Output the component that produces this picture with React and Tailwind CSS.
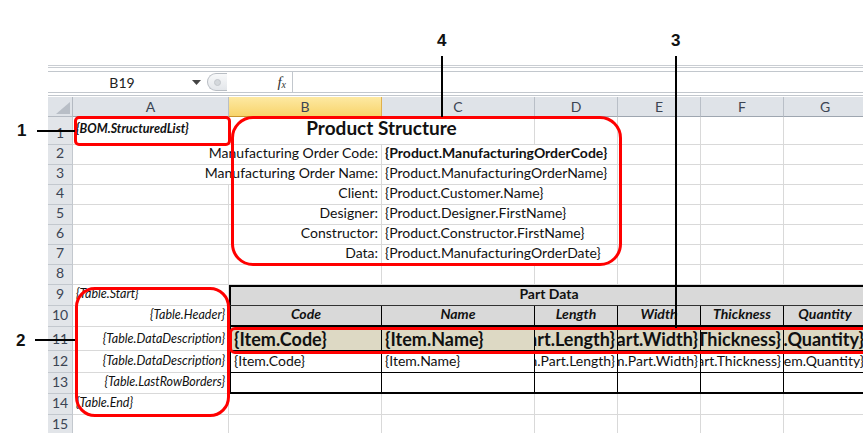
// Excel template sheet with red call-outs (BOM structured list report layout)
const COLS = 'grid-cols-[25px_156px_153px_153px_83px_83px_83px_83px]'
const ROWS = 'grid-rows-[20px_28px_repeat(7,20px)_21px_21px_24px_22px_21px_21px_21px]'

const GRID = 'border-r border-b border-[#d9d9d9]'

function Rh({ n }) {
  return (
    <div className="bg-[#e2e5e9] border-r border-b border-[#c3c8ce] flex items-end justify-center pb-[1px] text-[14px] text-[#3b4453]">
      {n}
    </div>
  )
}

function C({ className = '', children, span }) {
  const spanCls = { 2: 'col-span-2', 6: 'col-span-6' }[span] || ''
  return (
    <div className={`flex items-end pb-[1px] px-[3px] whitespace-nowrap ${spanCls} ${className}`}>
      {children}
    </div>
  )
}

// right aligned text that is cut off on the left, like Excel does with overflow into a filled cell
function Clip({ className = '', children }) {
  return (
    <div className={`flex items-end justify-end overflow-hidden pb-[1px] px-[2px] whitespace-nowrap ${className}`}>
      <span className="shrink-0">{children}</span>
    </div>
  )
}

const INFO = [
  ['Manufacturing Order Code:', '{Product.ManufacturingOrderCode}', true],
  ['Manufacturing Order Name:', '{Product.ManufacturingOrderName}'],
  ['Client:', '{Product.Customer.Name}'],
  ['Designer:', '{Product.Designer.FirstName}'],
  ['Constructor:', '{Product.Constructor.FirstName}'],
  ['Data:', '{Product.ManufacturingOrderDate}'],
]

const HEADS = ['Code', 'Name', 'Length', 'Width', 'Thickness', 'Quantity']
const DATA = ['{Item.Part.Length}', '{Item.Part.Width}', '{Item.Part.Thickness}', '{Item.Quantity}']

export default function App() {
  return (
    <div className="relative w-[863px] h-[433px] overflow-hidden bg-white font-[Lato,sans-serif] text-[#111]">
      <div className="h-[65px]" />
      <div className="ml-[48px]">
        {/* ribbon edge */}
        <div className="h-[3px] border-t border-b border-[#c9cdd2]" />
        <div className="h-[3px]" />
        {/* formula bar */}
        <div className="h-[22px] flex border-t border-b border-[#c2c7cd] bg-white">
          <div className="w-[159px] flex items-center text-[14px] text-[#222]">
            <span className="flex-1 text-center pl-[4px]">B19</span>
            <svg width="9" height="5" viewBox="0 0 9 5" className="mr-[6px]"><path d="M0 0h9L4.5 5z" fill="#444" /></svg>
          </div>
          <div className="w-[20px] my-[1px] rounded-l-full border border-r-0 border-[#b9bec4] bg-gradient-to-b from-[#f8f9fa] to-[#e3e6ea] flex items-center justify-center">
            <div className="w-[7px] h-[7px] rounded-full bg-[#d4d8dc] border border-[#c3c7cc]" />
          </div>
          <div className="w-[65px] flex items-center justify-end pr-[6px] font-[Liberation_Serif,serif] italic text-[15px] text-[#333]">
            f<span className="text-[10px] mt-[5px]">x</span>
          </div>
          <div className="flex-1 border-l border-[#c2c7cd]" />
        </div>
        <div className="h-[3px] border-b border-[#c2c7cd]" />
        <div className="h-[1px]" />

        {/* sheet */}
        <div className={`grid ${COLS} ${ROWS} text-[14px]`}>
          {/* column headers */}
          <div className="bg-[#dfe3e8] border-r border-b border-[#b4bac2] flex items-end justify-end p-[2px]">
            <svg width="14" height="12" viewBox="0 0 14 12"><path d="M14 0v12H0z" fill="#b8bec6" /></svg>
          </div>
          {['A', 'B', 'C', 'D', 'E', 'F', 'G'].map(l => (
            <div key={l} className={`flex items-center justify-center text-[14px] text-[#3b4453] border-r border-b ${l === 'B' ? 'bg-gradient-to-b from-[#fde9a2] to-[#f8d46a] border-[#e0b04c] border-b-[#c8932c]' : 'bg-[#dfe3e8] border-[#b9bfc7] border-b-[#9ea6b0]'}`}>
              {l}
            </div>
          ))}

          {/* row 1 */}
          <Rh n={1} />
          <C className={`${GRID} text-[12.5px] italic font-bold pb-[5px]`}>{'{BOM.StructuredList}'}</C>
          <C span={2} className={`${GRID} justify-center text-[19px] font-bold pb-[2px]`}>Product Structure</C>
          <C className={GRID} />
          <C className={GRID} />
          <C className={GRID} />
          <C className={GRID} />

          {/* rows 2-7 */}
          {INFO.map(([label, value, bold], i) => (
            <Row key={i} n={i + 2} label={label} value={value} bold={bold} wide={i < 2} />
          ))}

          {/* row 8 */}
          <Rh n={8} />
          {[0, 1, 2, 3, 4, 5, 6].map(k => <C key={k} className={GRID} />)}

          {/* row 9 */}
          <Rh n={9} />
          <C className={`${GRID} text-[12.5px] italic`}>{'{Table.Start}'}</C>
          <C span={6} className="justify-center bg-[#d9d9d9] border-t-2 border-l-2 border-b border-t-black border-l-black border-b-[#333] font-bold text-[14px]">Part Data</C>

          {/* row 10 */}
          <Rh n={10} />
          <C className={`${GRID} justify-end text-[12.5px] italic`}>{'{Table.Header}'}</C>
          {HEADS.map((h, i) => (
            <C key={h} className={`justify-center bg-[#d9d9d9] border-r border-b-2 border-black italic font-bold text-[14px] ${i === 0 ? 'border-l-2' : ''}`}>{h}</C>
          ))}

          {/* row 11 */}
          <Rh n={11} />
          <C className={`${GRID} justify-end text-[12.5px] italic`}>{'{Table.DataDescription}'}</C>
          <C className="bg-[#ddd9c4] border-l-2 border-r border-b border-black font-bold text-[18px] leading-[20px]">{'{Item.Code}'}</C>
          <C className="bg-[#ddd9c4] border-r border-b border-black font-bold text-[18px] leading-[20px]">{'{Item.Name}'}</C>
          {DATA.map(d => (
            <Clip key={d} className="bg-[#ddd9c4] border-r border-b border-black font-bold text-[18px] leading-[20px]">{d}</Clip>
          ))}

          {/* row 12 */}
          <Rh n={12} />
          <C className={`${GRID} justify-end text-[12.5px] italic`}>{'{Table.DataDescription}'}</C>
          <C className="border-l-2 border-r border-b border-black">{'{Item.Code}'}</C>
          <C className="border-r border-b border-black">{'{Item.Name}'}</C>
          {DATA.map(d => (
            <Clip key={d} className="border-r border-b border-black">{d}</Clip>
          ))}

          {/* row 13 */}
          <Rh n={13} />
          <C className={`${GRID} justify-end text-[12.5px] italic`}>{'{Table.LastRowBorders}'}</C>
          {[0, 1, 2, 3, 4, 5].map(k => (
            <C key={k} className={`border-r border-b-2 border-black ${k === 0 ? 'border-l-2' : ''}`} />
          ))}

          {/* row 14 */}
          <Rh n={14} />
          <C className={`${GRID} text-[12.5px] italic`}>{'{Table.End}'}</C>
          {[0, 1, 2, 3, 4, 5].map(k => <C key={k} className={GRID} />)}

          {/* row 15 */}
          <Rh n={15} />
          {[0, 1, 2, 3, 4, 5, 6].map(k => <C key={k} className={GRID} />)}
        </div>
      </div>

      {/* call-outs */}
      <div className="absolute left-[74px] top-[116px] w-[157px] h-[30px] border-[3px] border-[#ff0000] rounded-[5px]" />
      <div className="absolute left-[231px] top-[116px] w-[391px] h-[150px] border-[3px] border-[#ff0000] rounded-[22px]" />
      <div className="absolute left-[75px] top-[287px] w-[155px] h-[130px] border-[3px] border-[#ff0000] rounded-[20px]" />
      <div className="absolute left-[229px] top-[327px] w-[700px] h-[27px] border-[3px] border-[#ff0000] rounded-[6px]" />

      <div className="absolute left-[37px] top-[130px] w-[38px] h-[2px] bg-black" />
      <div className="absolute left-[35px] top-[339px] w-[40px] h-[2px] bg-black" />
      <div className="absolute left-[441px] top-[56px] w-[2px] h-[61px] bg-black" />
      <div className="absolute left-[675px] top-[56px] w-[2px] h-[272px] bg-black" />

      <span className="absolute left-[17px] top-[122px] font-[Liberation_Sans,Arial,sans-serif] font-bold text-[17px] leading-none">1</span>
      <span className="absolute left-[16px] top-[332px] font-[Liberation_Sans,Arial,sans-serif] font-bold text-[17px] leading-none">2</span>
      <span className="absolute left-[671px] top-[32px] font-[Liberation_Sans,Arial,sans-serif] font-bold text-[17px] leading-none">3</span>
      <span className="absolute left-[437px] top-[32px] font-[Liberation_Sans,Arial,sans-serif] font-bold text-[17px] leading-none">4</span>
    </div>
  )
}

function Row({ n, label, value, bold, wide }) {
  return (
    <>
      <Rh n={n} />
      {wide ? (
        <C span={2} className={`${GRID} justify-end`}>{label}</C>
      ) : (
        <>
          <C className={GRID} />
          <C className={`${GRID} justify-end`}>{label}</C>
        </>
      )}
      <C span={2} className={`${GRID} ${bold ? 'font-bold' : ''}`}>{value}</C>
      <C className={GRID} />
      <C className={GRID} />
      <C className={GRID} />
    </>
  )
}
